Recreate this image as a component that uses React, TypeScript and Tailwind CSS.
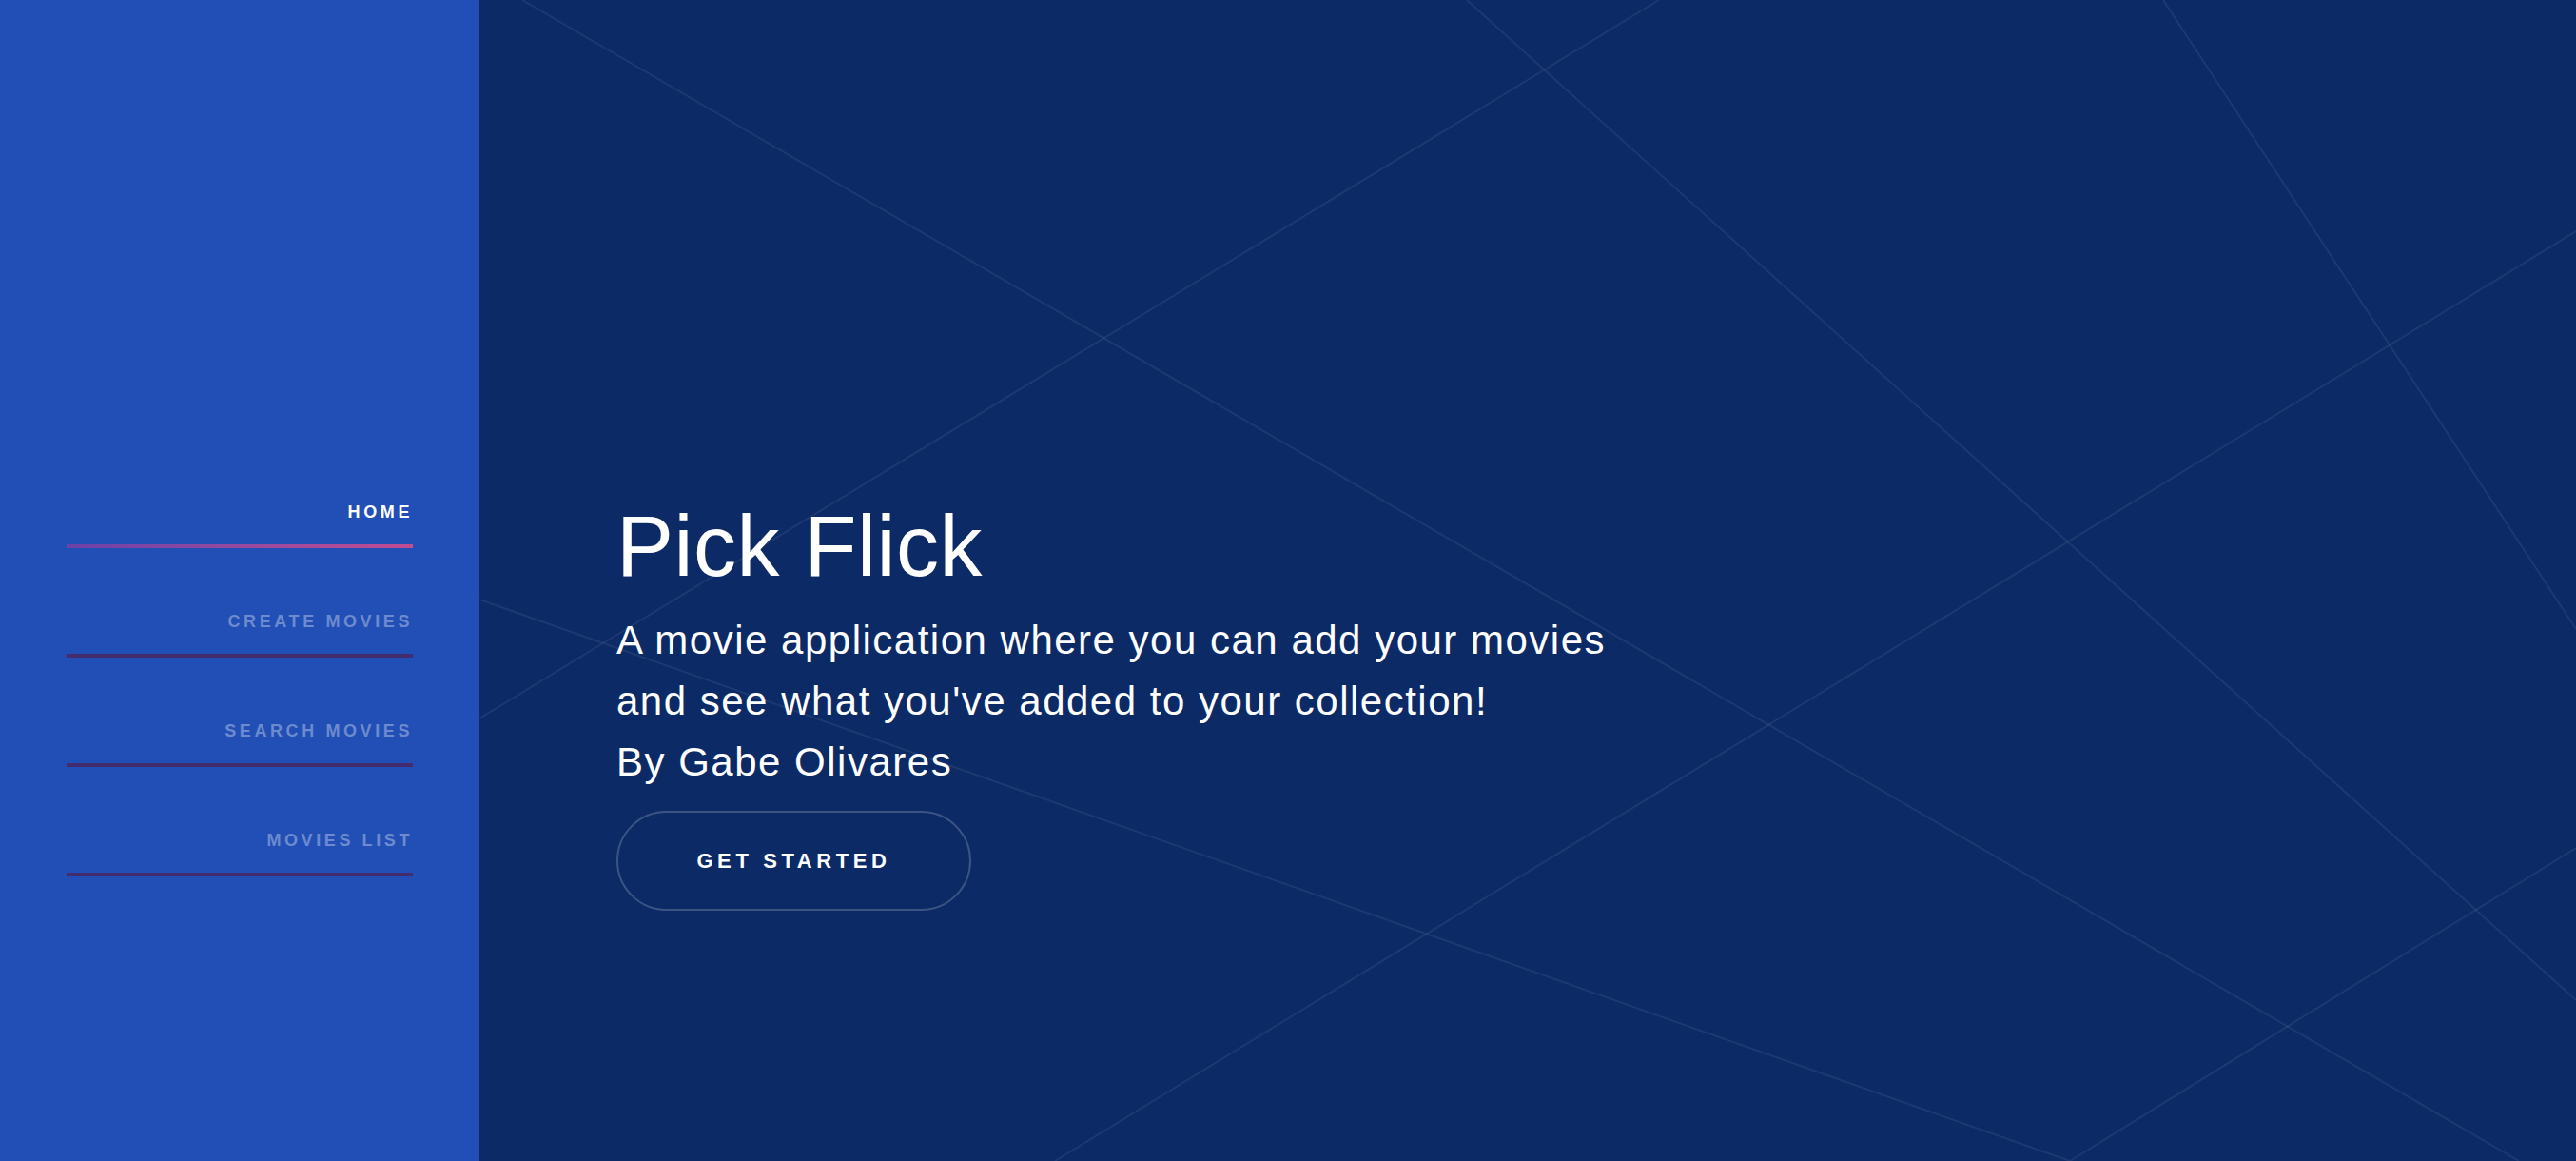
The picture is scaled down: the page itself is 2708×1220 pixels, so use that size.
import React from "react";

const navItems = [
  { label: "Home", active: true },
  { label: "Create Movies", active: false },
  { label: "Search Movies", active: false },
  { label: "Movies List", active: false },
];

// background lines, coords relative to the main panel (2204 x 1220)
const lines = [
  [45, 0, 2144, 1220],
  [1240, 0, 0, 755],
  [1038, 0, 2204, 1051],
  [605, 1220, 2204, 243],
  [1770, 0, 2204, 661],
  [0, 630, 1672, 1220],
  [1672, 1220, 2204, 891],
];

function Sidebar() {
  return (
    <aside className="w-[504px] shrink-0 bg-[#214fb5] px-[70px] pt-[529px]">
      <nav className="flex flex-col gap-[68px]">
        {navItems.map((item) => (
          <a key={item.label} href="#" className="flex flex-col">
            <span
              className={
                "text-right text-[18px] leading-[18px] font-bold uppercase tracking-[3.6px] " +
                (item.active ? "text-white" : "text-white/35")
              }
            >
              {item.label}
            </span>
            <span
              className={
                "mt-[25px] block h-1 w-full " +
                (item.active
                  ? "bg-gradient-to-r from-[#6c41a8] to-[#c24b92]"
                  : "bg-[#432c6e]")
              }
            />
          </a>
        ))}
      </nav>
    </aside>
  );
}

function Hero() {
  return (
    <main className="relative flex-1 overflow-hidden bg-[#0c2a66]">
      <svg
        className="absolute inset-0 h-full w-full"
        viewBox="0 0 2204 1220"
        preserveAspectRatio="none"
      >
        {lines.map(([x1, y1, x2, y2], i) => (
          <line
            key={i}
            x1={x1}
            y1={y1}
            x2={x2}
            y2={y2}
            stroke="#ffffff"
            strokeOpacity={0.07}
            strokeWidth={2}
          />
        ))}
      </svg>
      <div className="relative flex flex-col items-start pl-[144px] pt-[529px] text-white">
        <h1 className="text-[90px] leading-[90px] font-normal tracking-[0.5px]">Pick Flick</h1>
        <p className="mt-[22px] text-[42px] leading-[64px] tracking-[1.5px]">
          A movie application where you can add your movies
          <br />
          and see what you've added to your collection!
          <br />
          By Gabe Olivares
        </p>
        <button className="mt-[19px] flex h-[105px] w-[373px] items-center justify-center rounded-full border-2 border-white/20 text-[22px] font-bold uppercase tracking-[4.6px] text-white">
          Get Started
        </button>
      </div>
    </main>
  );
}

export default function App() {
  return (
    <div
      className="flex h-[1220px] w-full"
      style={{ fontFamily: '"Liberation Sans", Arial, Helvetica, sans-serif' }}
    >
      <Sidebar />
      <Hero />
    </div>
  );
}
